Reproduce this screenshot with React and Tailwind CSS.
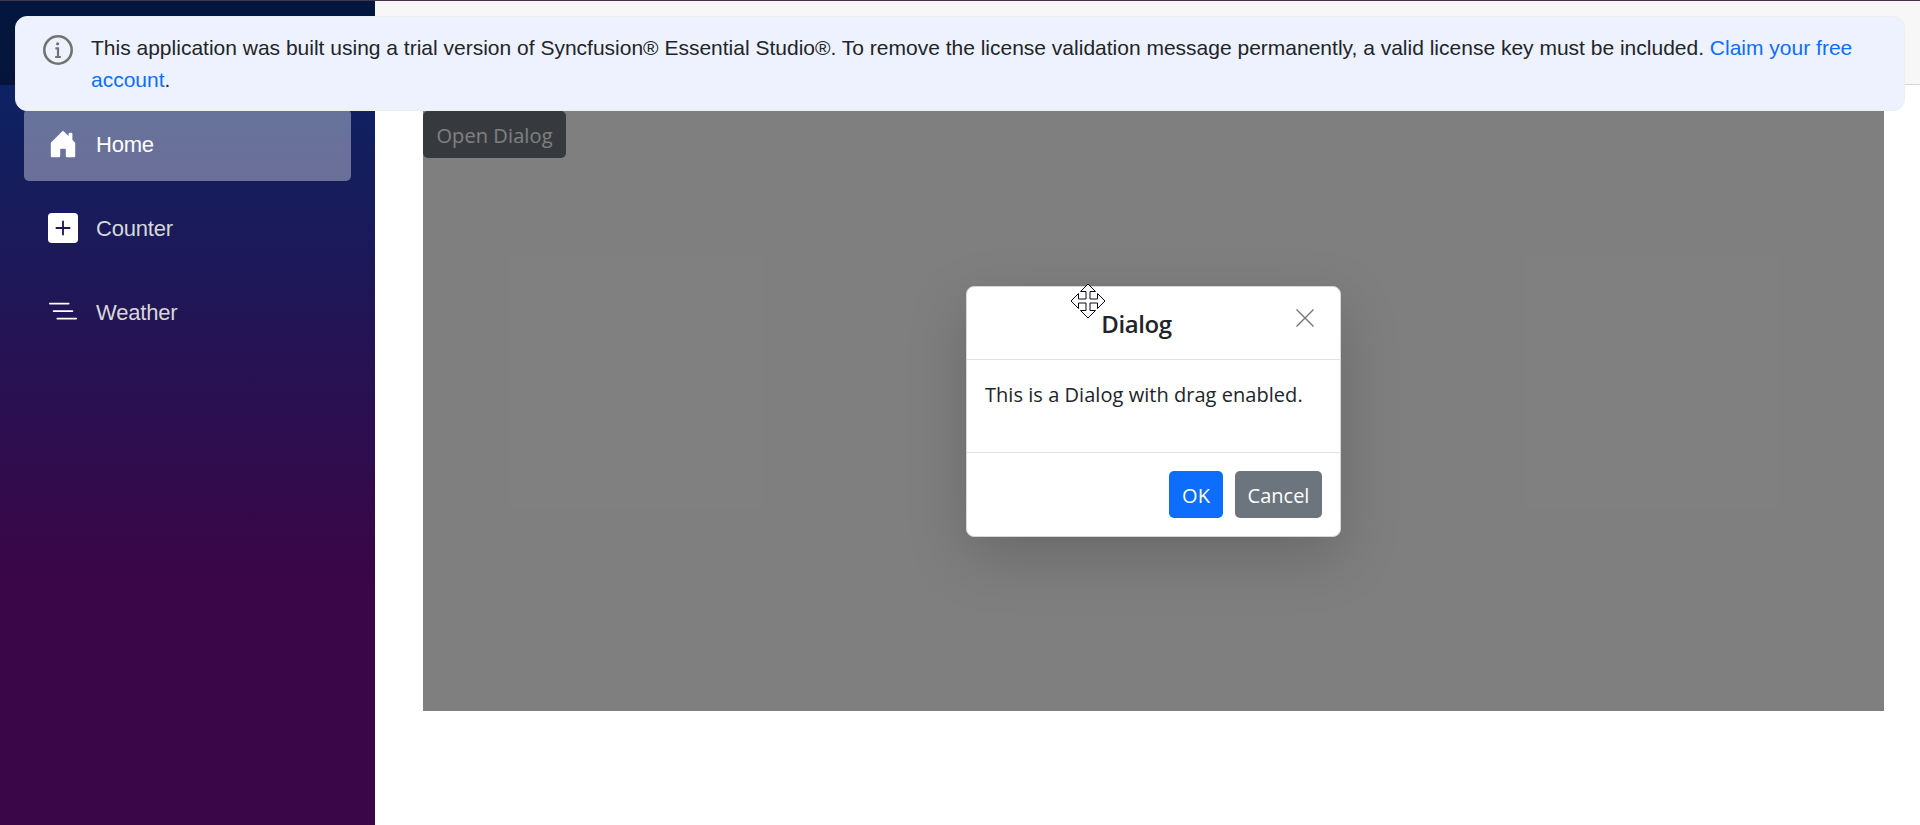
import React from "react";

function HomeIcon() {
  return (
    <svg viewBox="0 0 16 16" className="size-[30px] shrink-0" fill="white">
      <path d="M6.5 14.5v-3.505c0-.245.25-.495.5-.495h2c.25 0 .5.25.5.5v3.5a.5.5 0 0 0 .5.5h4a.5.5 0 0 0 .5-.5v-7a.5.5 0 0 0-.146-.354L13 5.793V2.5a.5.5 0 0 0-.5-.5h-1a.5.5 0 0 0-.5.5v1.293L8.354 1.146a.5.5 0 0 0-.708 0l-6 6A.5.5 0 0 0 1.5 7.5v7a.5.5 0 0 0 .5.5h4a.5.5 0 0 0 .5-.5Z" />
    </svg>
  );
}

function PlusIcon() {
  return (
    <svg viewBox="0 0 16 16" className="size-[30px] shrink-0" fill="white">
      <path d="M2 0a2 2 0 0 0-2 2v12a2 2 0 0 0 2 2h12a2 2 0 0 0 2-2V2a2 2 0 0 0-2-2H2zm6.5 4.5v3h3a.5.5 0 0 1 0 1h-3v3a.5.5 0 0 1-1 0v-3h-3a.5.5 0 0 1 0-1h3v-3a.5.5 0 0 1 1 0z" />
    </svg>
  );
}

function ListIcon() {
  return (
    <svg viewBox="0 0 16 16" className="size-[30px] shrink-0" fill="white">
      <path fillRule="evenodd" d="M4.5 11.5A.5.5 0 0 1 5 11h10a.5.5 0 0 1 0 1H5a.5.5 0 0 1-.5-.5zm-2-4A.5.5 0 0 1 3 7h10a.5.5 0 0 1 0 1H3a.5.5 0 0 1-.5-.5zm-2-4A.5.5 0 0 1 1 3h10a.5.5 0 0 1 0 1H1a.5.5 0 0 1-.5-.5z" />
    </svg>
  );
}

function NavItem({ icon, label, active }) {
  return (
    <a
      className={
        active
          ? "flex h-[72px] items-center gap-[18px] rounded-[5px] bg-white/37 px-6 pb-[2px] text-[22px] tracking-[-0.2px] text-white"
          : "flex h-[72px] items-center gap-[18px] rounded-[5px] px-6 pb-[2px] text-[22px] tracking-[-0.2px] text-[#d7d7d7]"
      }
    >
      {icon}
      <span>{label}</span>
    </a>
  );
}

function Sidebar() {
  return (
    <aside className="flex w-[375px] shrink-0 flex-col bg-[linear-gradient(180deg,rgb(5,39,103)_0%,#3a0647_70%)]">
      <div className="h-[84px] bg-black/40" />
      <nav className="flex flex-col gap-3 px-6 pt-6 font-['Liberation_Sans',sans-serif]">
        <NavItem icon={<HomeIcon />} label="Home" active />
        <NavItem icon={<PlusIcon />} label="Counter" />
        <NavItem icon={<ListIcon />} label="Weather" />
      </nav>
    </aside>
  );
}

function LicenseBanner() {
  return (
    <div className="absolute top-[15px] left-[15px] flex h-[95px] w-[1890px] rounded-[12px] border border-[#eeeeee] bg-[#eef2ff] pt-[15px] pl-[27px] font-['Liberation_Sans',sans-serif]">
      <svg viewBox="0 0 30 30" className="mt-[3px] size-[30px] shrink-0" fill="none" stroke="#737373">
        <circle cx="15" cy="15" r="13.7" strokeWidth="2.6" />
        <circle cx="14.6" cy="8.8" r="1.6" fill="#737373" stroke="none" />
        <path d="M12.4 13.4h2.6v8.4M12.2 22h5.6" strokeWidth="2.2" />
      </svg>
      <p className="ml-[18px] w-[1790px] text-[21px] leading-8 text-[#212529]">
        This application was built using a trial version of Syncfusion® Essential Studio®. To remove the license
        validation message permanently, a valid license key must be included.{" "}
        <a className="text-[#0d6efd]">
          Claim your free
          <br />
          account
        </a>
        .
      </p>
    </div>
  );
}

function MoveCursor() {
  return (
    <svg viewBox="-18 -18 36 36" className="absolute -top-[3.5px] left-[102.5px] size-9" fill="white" stroke="#0b0b1e" strokeWidth="1">
      <path d="M0-17 7.5-9.5H2V-2H9.5V-7.5L17 0 9.5 7.5V2H2V9.5H7.5L0 17-7.5 9.5H-2V2H-9.5V7.5L-17 0-9.5-7.5V-2H-2V-9.5H-7.5Z" />
    </svg>
  );
}

function Dialog() {
  return (
    <div className="relative flex h-[251px] w-[375px] flex-col rounded-[8px] border border-[#d4d6d8] bg-white text-[#212529] shadow-[0_20px_60px_rgba(0,0,0,0.175)]">
      <header className="flex h-[73px] items-start border-b border-[#dee2e6] px-[18px] pt-[17px]">
        <h2 className="flex-1 pl-px text-center text-[24px] leading-10 font-semibold tracking-[-0.4px]">Dialog</h2>
        <button className="flex size-[35px] items-center justify-center">
          <svg viewBox="0 0 18 18" className="-mt-[6px] size-[18px]" fill="none" stroke="#6b737a" strokeWidth="1.3">
            <path d="M.5.5l17 17M17.5.5l-17 17" />
          </svg>
        </button>
      </header>
      <div className="flex-1 px-[18px] pt-[20px] text-[20px] leading-[30px] tracking-[0.04px]">This is a Dialog with drag enabled.</div>
      <footer className="flex h-[84px] justify-end gap-3 border-t border-[#dee2e6] px-[18px] pt-[18px] text-[20px] text-white">
        <button className="h-[47px] w-[54px] rounded-[5px] bg-[#0d6efd] pt-[3px]">OK</button>
        <button className="h-[47px] w-[87px] rounded-[5px] bg-[#6c757d] pt-[3px]">Cancel</button>
      </footer>
      <MoveCursor />
    </div>
  );
}

export default function App() {
  return (
    <div className="relative h-[825px] w-[1920px] overflow-hidden border-t border-[#43364f] bg-white">
      <div className="flex h-full">
        <Sidebar />
        <main className="flex flex-1 flex-col">
          <div className="h-[84px] border-b border-[#d6d5d5] bg-[#f7f7f7]" />
          <div className="px-12 pt-[26px] pr-9">
            <section className="relative h-[600px] overflow-hidden bg-white font-['Open_Sans',sans-serif]">
              <button className="h-[47px] w-[143px] rounded-[5px] bg-[#6c757d] pt-[2px] text-[20px] tracking-[0.1px] text-white">Open Dialog</button>
              <div className="absolute inset-0 flex items-center justify-center bg-black/50">
                <Dialog />
              </div>
            </section>
          </div>
        </main>
      </div>
      <LicenseBanner />
    </div>
  );
}
